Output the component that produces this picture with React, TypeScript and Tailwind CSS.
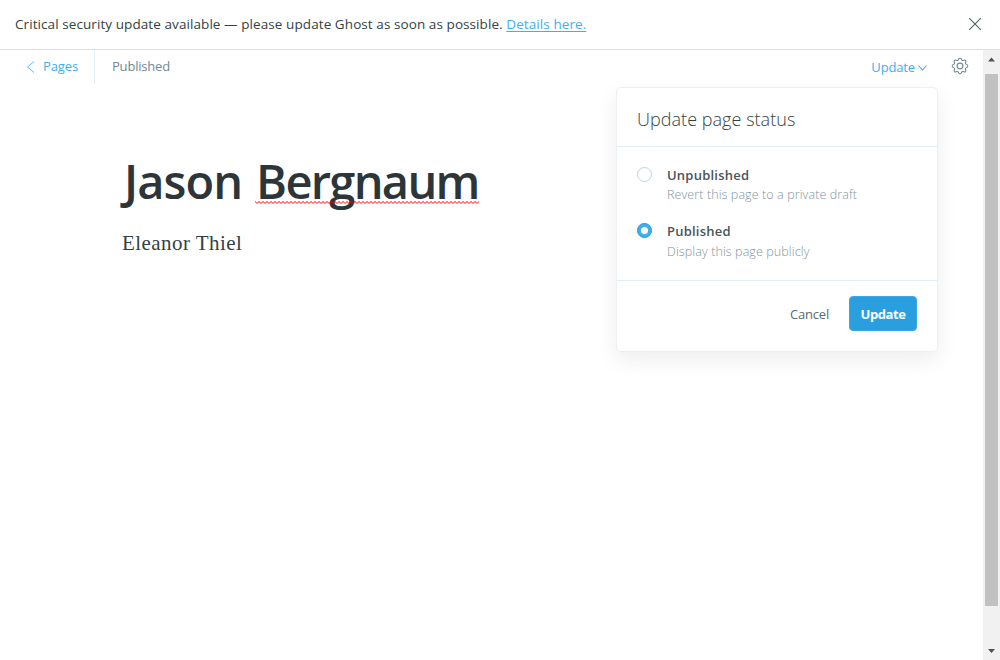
import React from 'react';

function Banner() {
  return (
    <div className="flex h-[50px] items-center justify-between border-b border-[#dae1e3] pr-[19px] pb-px pl-[15px]">
      <p className="h-5 text-[13.5px] leading-5 tracking-[0.08px] whitespace-nowrap text-[#343f44]">
        Critical security update available — please update Ghost as soon as possible.{' '}
        <a className="text-[#3eb0ef] underline decoration-1 underline-offset-[1.5px]">Details here.</a>
      </p>
      <svg className="h-3 w-3" viewBox="0 0 12 12" fill="none" stroke="#586367" strokeWidth="1.1">
        <path d="M0 0L12 12M12 0L0 12" />
      </svg>
    </div>
  );
}

function Gear() {
  return (
    <svg className="h-[18px] w-[18px]" viewBox="0 0 18 18" fill="none" stroke="#738a94" strokeWidth="1.1" strokeLinejoin="round">
      <circle cx="9" cy="9" r="2.9" />
      <path d="M7.500 2.300C7.800 .9 10.200 .9 10.500 2.300C10.800 3.500 11.800 3.900 12.800 3.300C14.100 2.500 15.500 3.900 14.700 5.200C14.100 6.200 14.500 7.200 15.700 7.500C17.100 7.800 17.100 10.200 15.700 10.500C14.500 10.800 14.100 11.800 14.700 12.800C15.500 14.100 14.100 15.500 12.800 14.700C11.800 14.100 10.800 14.500 10.500 15.700C10.200 17.100 7.800 17.100 7.500 15.700C7.200 14.500 6.200 14.100 5.200 14.700C3.900 15.500 2.500 14.100 3.300 12.800C3.900 11.800 3.500 10.800 2.300 10.500C.9 10.200 .9 7.800 2.300 7.500C3.500 7.200 3.900 6.200 3.300 5.200C2.500 3.900 3.900 2.500 5.200 3.300C6.200 3.900 7.200 3.500 7.500 2.300z" />
    </svg>
  );
}

function Toolbar() {
  return (
    <header className="flex h-[34px] justify-between pr-[14px] pl-[26px]">
      <div className="flex">
        <div className="flex w-[69px] items-center border-r border-[#e3edf2] pb-px">
          <svg className="h-3 w-[9px]" viewBox="0 0 9 12" fill="none" stroke="#5fbdf1">
            <path d="M8 .5L1.500 6L8 11.500" />
          </svg>
          <span className="ml-2 text-[13px] tracking-[-0.1px] text-[#3eb0ef]">Pages</span>
        </div>
        <span className="ml-[17px] text-[13px] leading-[33px] tracking-[-0.2px] text-[#738a94]">Published</span>
      </div>
      <div className="flex h-[34px] items-center">
        <span className="text-[13px] leading-[34px] tracking-[-0.15px] text-[#3eb0ef]">Update</span>
        <svg className="mt-[2px] ml-[3px] h-[6px] w-[9px]" viewBox="0 0 9 6" fill="none" stroke="#4aa8dd" strokeWidth="1.100">
          <path d="M.5 .5L4.500 5L8.500 .5" />
        </svg>
        <button className="mb-[2px] ml-6">
          <Gear />
        </button>
      </div>
    </header>
  );
}

function Option({ title, note, checked }: { title: string; note: string; checked?: boolean }) {
  return (
    <label className="flex h-[57px]">
      <span
        className={
          checked
            ? 'mt-[-1px] flex h-[15px] w-[15px] items-center justify-center rounded-full border border-[#2a93d1] bg-[#3eb0ef]'
            : 'mt-0 flex h-[15px] w-[15px] rounded-full border border-[#bcd5e3] bg-white'
        }
      >
        {checked && <span className="h-[7px] w-[7px] rounded-full bg-white" />}
      </span>
      <span className="ml-[15px] flex flex-col whitespace-nowrap">
        <span
          className={
            checked
              ? 'mt-[-3px] mb-px h-5 text-[13px] leading-5 font-semibold tracking-[0.22px] text-[#4a5459]'
              : 'mt-[-2px] h-5 text-[13px] leading-5 font-semibold tracking-[0.22px] text-[#4a5459]'
          }
        >
          {title}
        </span>
        <span className="h-5 text-[12.5px] leading-5 font-light tracking-[0.1px] text-[#7f949d]">{note}</span>
      </span>
    </label>
  );
}

function StatusMenu() {
  return (
    <div className="absolute top-[37px] left-[616px] flex h-[265px] w-[322px] flex-col rounded-[5px] border border-[#edf0f2] bg-white shadow-[0_8px_20px_rgba(39,44,49,0.08)]">
      <div className="flex h-[59px] items-center border-b border-[#e3edf5] px-5 pt-1">
        <h2 className="text-[18px] leading-6 font-light tracking-[0.04px] text-[#343f44]">Update page status</h2>
      </div>
      <div className="h-[134px] border-b border-[#e3edf5] px-5 pt-5">
        <Option title="Unpublished" note="Revert this page to a private draft" />
        <Option title="Published" note="Display this page publicly" checked />
      </div>
      <div className="flex justify-end px-5 pt-[15px]">
        <button className="mr-5 h-[35px] pt-[2px] text-[13px] tracking-[-0.2px] text-[#586b73]">Cancel</button>
        <button className="h-[35px] w-[68px] rounded-[4px] border border-[#3aa8e6] bg-[#2a9fe0] pt-[2px] text-[13px] font-bold tracking-[-0.4px] text-white">
          Update
        </button>
      </div>
    </div>
  );
}

function Scrollbar() {
  return (
    <div className="flex w-[17px] flex-col items-center bg-[#f1f1f1]">
      <svg className="h-6 w-[17px]" viewBox="0 0 17 24" fill="#505050">
        <path d="M5 11.500L8.500 7.500L12 11.500z" />
      </svg>
      <div className="h-[532px] w-[13px] bg-[#c1c1c1]" />
      <svg className="mt-auto h-[17px] w-[17px]" viewBox="0 0 17 17" fill="#505050">
        <path d="M5 6L8.500 10L12 6z" />
      </svg>
    </div>
  );
}

function Squiggle() {
  return (
    <svg className="absolute bottom-0 left-[-1px] h-[3px] w-[224px]">
      <defs>
        <pattern id="squiggle" width="4" height="3" patternUnits="userSpaceOnUse">
          <path d="M-1 -.5L2 2.500L5 -.5" fill="none" stroke="#ff0000" strokeWidth="1" />
        </pattern>
      </defs>
      <rect width="100%" height="3" fill="url(#squiggle)" />
    </svg>
  );
}

export default function App() {
  return (
    <div className="flex h-[660px] w-[1000px] flex-col overflow-hidden bg-white font-['Open_Sans','Noto_Sans',sans-serif]">
      <Banner />
      <div className="flex h-[610px]">
        <main className="relative flex-1">
          <Toolbar />
          <article className="pt-[64px] pl-[124px]">
            <h1 className="h-[66px] text-[47px] leading-[66px] font-semibold tracking-[-0.9px] whitespace-nowrap text-[#2b353a]">
              Jason{' '}
              <span className="relative ml-[2.5px] inline-block h-[56px] tracking-[-1.7px]">
                Bergnaum
                <Squiggle />
              </span>
            </h1>
            <p className="mt-[13px] -ml-[2px] font-['Liberation_Serif',serif] text-[21px] leading-8 tracking-[0.45px] text-[#343f44]">Eleanor Thiel</p>
          </article>
          <StatusMenu />
        </main>
        <Scrollbar />
      </div>
    </div>
  );
}
